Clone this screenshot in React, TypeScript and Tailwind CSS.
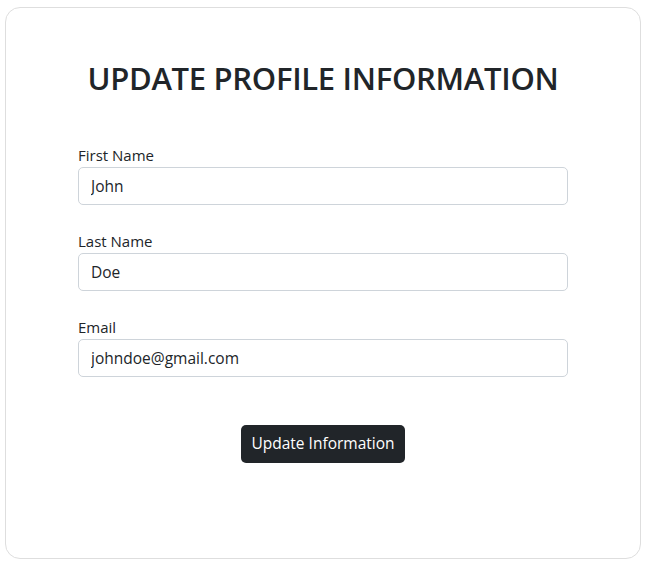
import React from 'react';

const fields = [
  { label: 'First Name', value: 'John', type: 'text' },
  { label: 'Last Name', value: 'Doe', type: 'text' },
  { label: 'Email', value: 'johndoe@gmail.com', type: 'email' },
];

const App: React.FC = () => {
  return (
    <div className="min-h-screen bg-white pt-[7px] pl-[5px] font-['Open_Sans',sans-serif] text-[#212529]">
      <div className="w-[636px] h-[552px] border border-[#dedede] rounded-[15px] pt-[50px]">
        <h1 className="text-center text-[31px] leading-[40px] font-semibold tracking-[-0.3px]">
          UPDATE PROFILE INFORMATION
        </h1>
        <form className="w-[490px] mx-auto mt-[45px]" onSubmit={(e) => e.preventDefault()}>
          {fields.map((f) => (
            <div key={f.label} className="mb-6">
              <label className="block text-[15px] leading-6">{f.label}</label>
              <input
                type={f.type}
                defaultValue={f.value}
                className="block w-full h-[38px] px-3 text-[15.5px] text-[#212529] border border-[#ced4da] rounded-[5px] outline-none"
              />
            </div>
          ))}
          <div className="flex justify-center pt-6">
            <button
              type="submit"
              className="h-[38px] px-[10.5px] bg-[#212529] text-white text-[15.5px] rounded-[5px]"
            >
              Update Information
            </button>
          </div>
        </form>
      </div>
    </div>
  );
};

export default App;
